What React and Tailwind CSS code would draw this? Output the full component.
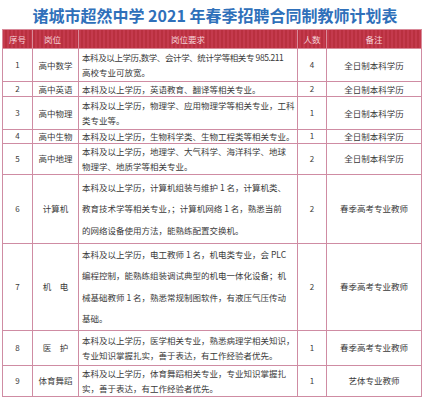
import React from 'react'

const rows = [
  { no: '1', pos: '高中数学', h: 'h-[33px]', lh: 'leading-[15px]', req: ['本科及以上学历,数学、会计学、统计学等相关专 985.211', '高校专业可放宽。'], n: '4', note: '全日制本科学历', tight: true },
  { no: '2', pos: '高中英语', h: 'h-[15px]', lh: 'leading-[13px]', req: ['本科及以上学历，英语教育、翻译等相关专业。'], n: '2', note: '全日制本科学历' },
  { no: '3', pos: '高中物理', h: 'h-[33px]', lh: 'leading-[15px]', req: ['本科及以上学历，物理学、应用物理学等相关专业，工科', '类专业等。'], n: '1', note: '全日制本科学历' },
  { no: '4', pos: '高中生物', h: 'h-[13px]', lh: 'leading-[12px]', req: ['本科及以上学历，生物科学类、生物工程类等相关专业。'], n: '1', note: '全日制本科学历' },
  { no: '5', pos: '高中地理', h: 'h-[31px]', lh: 'leading-[15px]', req: ['本科及以上学历，地理学、大气科学、海洋科学、地球', '物理学、地质学等相关专业。'], n: '2', note: '全日制本科学历' },
  { no: '6', pos: '计算机', h: 'h-[69px]', lh: 'leading-[21.5px]', req: ['本科及以上学历，计算机组装与维护 1 名，计算机类、', '教育技术学等相关专业，；计算机网络 1 名，熟悉当前', '的网络设备使用方法，能熟练配置交换机。'], n: '2', note: '春季高考专业教师' },
  { no: '7', pos: '机　电', h: 'h-[86px]', lh: 'leading-[21.5px]', req: ['本科及以上学历，电工教师 1 名，机电类专业，会 PLC', '编程控制，能熟练组装调试典型的机电一体化设备；机', '械基础教师 1 名，熟悉常规制图软件，有液压气压传动', '基础。'], n: '2', note: '春季高考专业教师' },
  { no: '8', pos: '医　护', h: 'h-[35px]', lh: 'leading-[15px]', req: ['本科及以上学历，医学相关专业，熟悉病理学相关知识，', '专业知识掌握扎实，善于表达，有工作经验者优先。'], n: '1', note: '春季高考专业教师' },
  { no: '9', pos: '体育舞蹈', h: 'h-[31px]', lh: 'leading-[15px]', req: ['本科及以上学历，体育舞蹈相关专业，专业知识掌握扎', '实，善于表达，有工作经验者优先。'], n: '1', note: '艺体专业教师' },
]

const cell = 'border border-[#cf8ca3] p-0 align-middle text-center'

export default function App() {
  return (
    <div className="w-[422px] h-[400px] bg-white overflow-hidden" style={{ fontFamily: '"Noto Sans CJK SC", "Noto Sans", sans-serif' }}>
      {/* Title */}
      <div className="h-[29px] flex items-center justify-center pl-[8px] text-[16px] font-bold text-[#2f70ba] whitespace-nowrap">
        诸城市超然中学 2021 年春季招聘合同制教师计划表
      </div>

      <table className="ml-[2px] w-[419px] table-fixed border-collapse text-[8.5px] text-[#3a3a3a]">
        <colgroup>
          <col className="w-[30px]" />
          <col className="w-[46px]" />
          <col className="w-[219px]" />
          <col className="w-[29px]" />
          <col className="w-[95px]" />
        </colgroup>
        <thead>
          <tr className="h-[19px] bg-[repeating-linear-gradient(90deg,#c43a4d_0px,#c43a4d_2px,#b9303f_2px,#b9303f_4px)] text-[#f6d3da]">
            <th className="border border-[#d98a99] font-normal">序号</th>
            <th className="border border-[#d98a99] font-normal text-left pl-[11px]">岗位</th>
            <th className="border border-[#d98a99] font-normal">岗位要求</th>
            <th className="border border-[#d98a99] font-normal">人数</th>
            <th className="border border-[#d98a99] font-normal">备注</th>
          </tr>
        </thead>
        <tbody>
          {rows.map((r) => (
            <tr key={r.no} className={r.h}>
              <td className={`${cell} text-[8px]`}>{r.no}</td>
              <td className={`${cell} whitespace-nowrap`}>{r.pos}</td>
              <td className={`${cell} text-left pl-[3px] ${r.lh} whitespace-nowrap`}>
                {r.req.map((l, i) => (
                  <div key={i} className={r.tight && i === 0 ? 'tracking-[-0.4px]' : ''}>{l}</div>
                ))}
              </td>
              <td className={`${cell} text-[8px]`}>{r.n}</td>
              <td className={`${cell} whitespace-nowrap`}>{r.note}</td>
            </tr>
          ))}
        </tbody>
      </table>
    </div>
  )
}
